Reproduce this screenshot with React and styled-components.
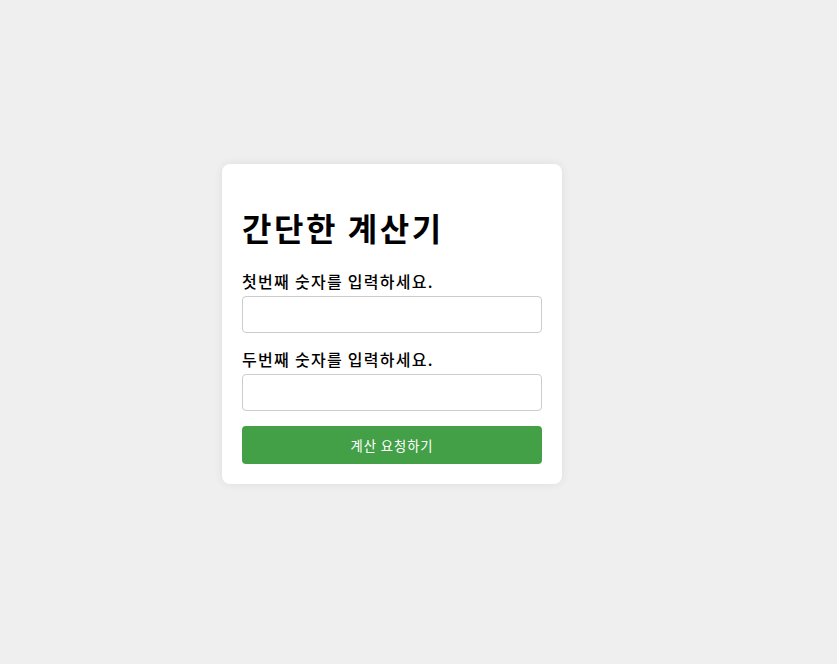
import React from 'react';
import styled, { createGlobalStyle } from 'styled-components';

const GlobalStyle = createGlobalStyle`
  html, body {
    margin: 0;
    padding: 0;
    background: #efefef;
    font-family: "Noto Sans CJK KR", "Noto Sans", sans-serif;
  }
`;

const Page = styled.div`
  min-height: 100vh;
  box-sizing: border-box;
  padding: 164px 0 0 222px;
`;

const Card = styled.form`
  width: 300px;
  padding: 20px;
  background: #fff;
  border-radius: 8px;
  box-shadow: 0 0 10px rgba(0, 0, 0, 0.08);
  display: flex;
  flex-direction: column;
`;

const Title = styled.h1`
  margin: 23px 0 23px;
  font-size: 32px;
  line-height: 40px;
  font-weight: 700;
  letter-spacing: 0.08em;
  color: #000;
`;

const Label = styled.label`
  display: block;
  margin-bottom: 4px;
  font-size: 16px;
  line-height: 22px;
  font-weight: 500;
  letter-spacing: 0.08em;
  color: #000;
`;

const Input = styled.input`
  box-sizing: border-box;
  width: 100%;
  height: 37px;
  margin: 0 0 15px;
  padding: 0 10px;
  border: 1px solid #ccc;
  border-radius: 4px;
  font: inherit;
  outline: none;
`;

const Button = styled.button`
  height: 38px;
  border: none;
  border-radius: 4px;
  background: #43a047;
  color: #fff;
  font-family: inherit;
  font-size: 13.33px;
  letter-spacing: 0.07em;
  cursor: pointer;
`;

export default function App() {
  return (
    <>
      <GlobalStyle />
      <Page>
        <Card onSubmit={(e) => e.preventDefault()}>
          <Title>간단한 계산기</Title>
          <Label htmlFor="first">첫번째 숫자를 입력하세요.</Label>
          <Input id="first" type="text" />
          <Label htmlFor="second">두번째 숫자를 입력하세요.</Label>
          <Input id="second" type="text" />
          <Button type="submit">계산 요청하기</Button>
        </Card>
      </Page>
    </>
  );
}
